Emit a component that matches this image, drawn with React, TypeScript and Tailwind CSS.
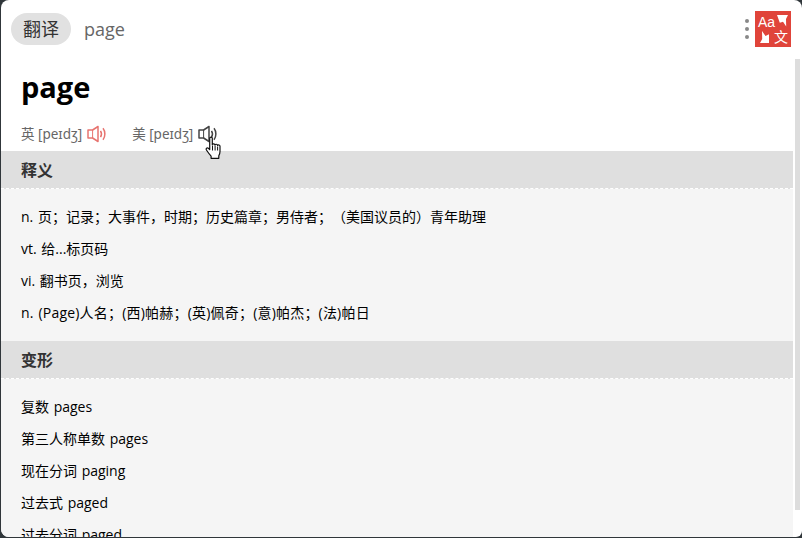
const font = { fontFamily: '"Open Sans", "Noto Sans CJK SC", sans-serif' };

function Speaker({ className }: { className: string }) {
  return (
    <svg viewBox="0 0 20 18" fill="none" stroke="currentColor" strokeWidth="1.5" className={className}>
      <path d="M1 5h4.6L11 1.5v15L5.6 13H1z" strokeLinejoin="round" />
      <path d="M5.6 5v8" strokeWidth="1" />
      <path d="M13.5 5.8c1.2 1.9 1.2 4.5 0 6.4" />
      <path d="M16 3.3c2.5 3.2 2.5 8.2 0 11.4" />
    </svg>
  );
}

function HandCursor() {
  return (
    <svg viewBox="0 0 18 24" className="absolute left-[203px] top-[136px] h-6 w-[19px]">
      <path
        d="M5.2 2.3c0-1.5 2.6-1.5 2.6 0v6.4c.3-1.2 2.5-1.2 2.7.2.4-1 2.4-.9 2.6.5.5-.8 2.3-.6 2.4.8v5.2c0 2-.5 3-1.2 4.3v2.6H6.6v-2.1c-1.4-1.6-3.2-4-4.7-6.2-1-1.5.7-2.8 2-1.7l1.3 1.3z"
        fill="#fff"
        stroke="#111"
        strokeWidth="1.2"
        strokeLinejoin="round"
      />
      <path d="M8 9.5v5M10.6 9.5v5M13.1 10.5v4" stroke="#111" strokeWidth="1" />
    </svg>
  );
}

function Logo() {
  return (
    <div className="relative h-9 w-9 bg-[#e0443a] text-white">
      <span className="absolute left-[3px] top-[2px] text-sm leading-[18px]" style={{ fontFamily: '"Liberation Sans", sans-serif' }}>
        Aa
      </span>
      <span className="absolute left-[19px] top-[18px] text-sm leading-4">文</span>
      <svg viewBox="0 0 36 36" className="absolute inset-0 h-9 w-9" fill="#fff">
        <path d="M22 4h11l-2 4 .2 7.5-3.2-4.7-3.2 1z" />
        <path d="M7 20l3.5 5 3.5-1.8V32H5l2.2-4z" />
      </svg>
    </div>
  );
}

function Section({ title, rows }: { title: string; rows: string[] }) {
  return (
    <section>
      <h2 className="flex h-[38px] items-center border-b border-dashed border-white bg-[#dfdfdf] pl-5 text-base font-bold text-[#333]">
        {title}
      </h2>
      <div className="flex flex-col py-3 text-sm text-black [text-spacing-trim:space-all] [word-spacing:1px]">
        {rows.map((row) => (
          <p key={row} className={row.startsWith("n. (Page)") ? "flex h-8 items-center pl-5 tracking-[0.2px]" : "flex h-8 items-center pl-5"}>
            {row}
          </p>
        ))}
      </div>
    </section>
  );
}

export default function App() {
  return (
    <div className="h-[538px] w-[802px] overflow-hidden bg-[#30363a]" style={font}>
      <div className="relative ml-px h-[537px] w-[801px] overflow-hidden rounded-t-lg rounded-bl-lg rounded-br-md bg-white">
        {/* Header */}
        <header className="flex h-[59px] items-start justify-between pt-[11px] pl-2.5 pr-[10px]">
          <div className="flex items-center gap-[13px] pt-0.5">
            <span className="flex h-8 w-[60px] items-center justify-center rounded-full bg-[#e1e1e1] text-lg text-[#333]">
              翻译
            </span>
            <span className="text-lg text-[#666]">page</span>
          </div>
          <div className="mr-px flex items-center gap-1.5">
            <div className="flex flex-col gap-1">
              <span className="h-1 w-1 rounded-full bg-[#888]" />
              <span className="h-1 w-1 rounded-full bg-[#888]" />
              <span className="h-1 w-1 rounded-full bg-[#888]" />
            </div>
            <Logo />
          </div>
        </header>

        <div className="flex">
          <main className="w-[792px]">
            <h1 className="flex h-[56px] items-center pl-5 text-[29px] font-bold text-black">page</h1>
            <div className="flex h-[36px] items-center pl-5 pt-0.5 text-[13.5px] text-[#666]" style={{ fontFamily: '"Noto Sans", "Noto Sans CJK SC", sans-serif' }}>
              <span>英 [peɪdʒ]</span>
              <Speaker className="ml-[5px] h-[18px] w-5 text-[#e77470]" />
              <span className="ml-[25px]">美 [peɪdʒ]</span>
              <Speaker className="ml-[5px] h-[18px] w-5 text-[#444]" />
            </div>
            <div className="bg-[#f5f5f5]">
              <Section
                title="释义"
                rows={[
                  "n. 页；记录；大事件，时期；历史篇章；男侍者；（美国议员的）青年助理",
                  "vt. 给...标页码",
                  "vi. 翻书页，浏览",
                  "n. (Page)人名；(西)帕赫；(英)佩奇；(意)帕杰；(法)帕日",
                ]}
              />
              <Section
                title="变形"
                rows={["复数 pages", "第三人称单数 pages", "现在分词 paging", "过去式 paged", "过去分词 paged"]}
              />
            </div>
          </main>
          <div className="ml-[2px] h-[451px] w-[5px] bg-[#dddddd]" />
        </div>
        <HandCursor />
      </div>
    </div>
  );
}
